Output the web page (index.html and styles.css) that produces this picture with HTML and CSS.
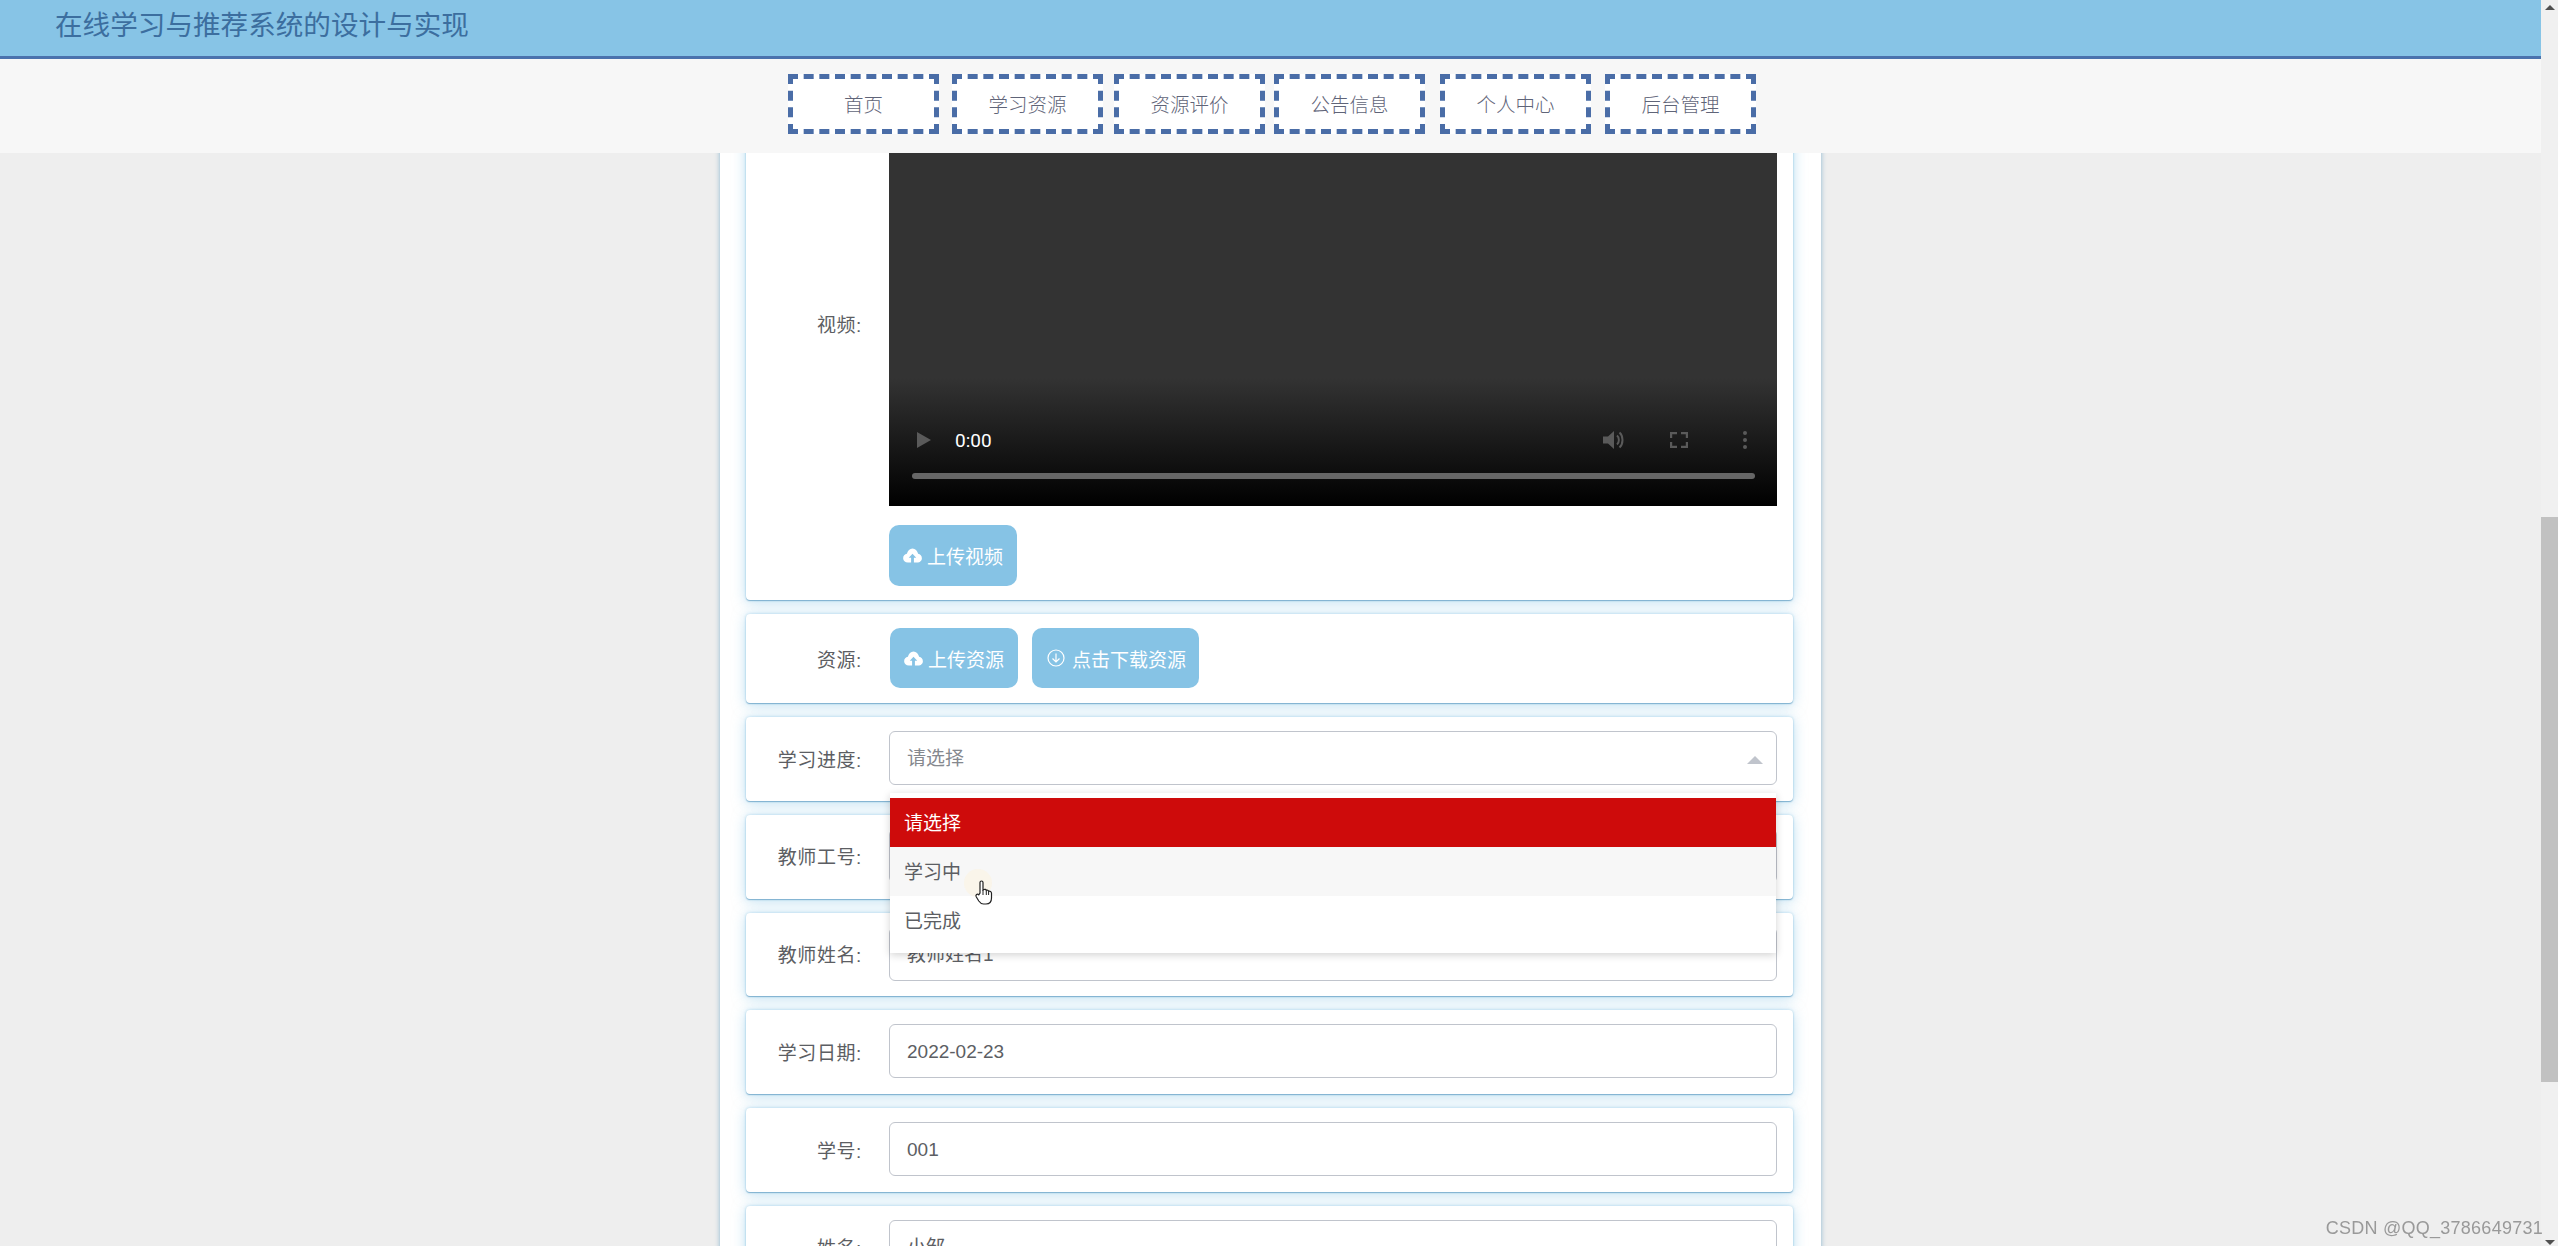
FILE: index.html
```html
<!DOCTYPE html>
<html lang="zh-CN">
<head>
    <meta charset="UTF-8">
    <title>在线学习与推荐系统的设计与实现</title>
    <link rel="stylesheet" href="styles.css">
</head>
<body>
    <div class="page">
        <header class="title-bar">
            <h1>在线学习与推荐系统的设计与实现</h1>
        </header>
        <nav class="nav-bar">
            <a class="nav-item">首页</a>
            <a class="nav-item">学习资源</a>
            <a class="nav-item">资源评价</a>
            <a class="nav-item">公告信息</a>
            <a class="nav-item">个人中心</a>
            <a class="nav-item">后台管理</a>
        </nav>

        <main class="content">
            <form class="panel">
                <div class="row row-video">
                    <label class="row-label">视频:</label>
                    <div class="row-body">
                        <div class="video">
                            <div class="video-controls">
                                <svg class="video-play" width="14" height="16" viewBox="0 0 14 16"><path d="M0 0L14 8L0 16Z"/></svg>
                                <span class="video-time">0:00</span>
                                <svg class="video-volume" width="22" height="20" viewBox="0 0 22 20"><path d="M1 6.500H6L12 1V19L6 13.500H1Z"/><path d="M15 5.500C17.500 7.500 17.500 12.500 15 14.500M17.500 2.500C21.500 6 21.500 14 17.500 17.500" fill="none" stroke="#5a5a5a" stroke-width="2"/></svg>
                                <svg class="video-full" width="18" height="16" viewBox="0 0 18 16"><path d="M1 6V1H7M11 1H17V6M17 10V15H11M7 15H1V10" fill="none" stroke="#5a5a5a" stroke-width="2.400"/></svg>
                                <svg class="video-menu" width="4" height="18" viewBox="0 0 4 18"><circle cx="2" cy="2" r="2"/><circle cx="2" cy="9" r="2"/><circle cx="2" cy="16" r="2"/></svg>
                            </div>
                            <div class="video-progress"></div>
                        </div>
                        <button type="button" class="btn btn-upload btn-tall">
                            <svg class="icon" viewBox="0 0 20 16"><path d="M5 15.500C2.200 15.500 0 13.400 0 10.800C0 8.500 1.700 6.600 4 6.200C4.800 2.800 7.100 0.500 10 0.500C12.900 0.500 15.200 2.800 16 6.200C18.300 6.600 20 8.500 20 10.800C20 13.400 17.800 15.500 15 15.500H11.500V10.500H14L10 6L6 10.500H8.500V15.500Z"/></svg>
                            上传视频
                        </button>
                    </div>
                </div>

                <div class="row row-resource">
                    <label class="row-label">资源:</label>
                    <div class="row-body row-buttons">
                        <button type="button" class="btn btn-upload">
                            <svg class="icon" viewBox="0 0 20 16"><path d="M5 15.500C2.200 15.500 0 13.400 0 10.800C0 8.500 1.700 6.600 4 6.200C4.800 2.800 7.100 0.500 10 0.500C12.900 0.500 15.200 2.800 16 6.200C18.300 6.600 20 8.500 20 10.800C20 13.400 17.800 15.500 15 15.500H11.500V10.500H14L10 6L6 10.500H8.500V15.500Z"/></svg>
                            上传资源
                        </button>
                        <button type="button" class="btn btn-download">
                            <svg class="icon-line" viewBox="0 0 18 18"><circle cx="9" cy="9" r="8"/><path d="M9 4.500V12.500M5.500 9.500L9 13L12.500 9.500"/></svg>
                            点击下载资源
                        </button>
                    </div>
                </div>

                <div class="row">
                    <label class="row-label">学习进度:</label>
                    <div class="row-body select">
                        <div class="input input-placeholder">请选择</div>
                        <span class="select-arrow"></span>
                        <ul class="select-menu">
                            <li class="select-option is-selected">请选择</li>
                            <li class="select-option is-hover">学习中</li>
                            <li class="select-option">已完成</li>
                        </ul>
                    </div>
                </div>

                <div class="row">
                    <label class="row-label">教师工号:</label>
                    <div class="row-body"><div class="input">教师工号1</div></div>
                </div>
                <div class="row">
                    <label class="row-label">教师姓名:</label>
                    <div class="row-body"><div class="input">教师姓名1</div></div>
                </div>
                <div class="row">
                    <label class="row-label">学习日期:</label>
                    <div class="row-body"><div class="input">2022-02-23</div></div>
                </div>
                <div class="row">
                    <label class="row-label">学号:</label>
                    <div class="row-body"><div class="input">001</div></div>
                </div>
                <div class="row">
                    <label class="row-label">姓名:</label>
                    <div class="row-body"><div class="input">小邹</div></div>
                </div>
            </form>
        </main>
    </div>

    <div class="scrollbar">
        <span class="scroll-up"></span>
        <div class="scroll-thumb"></div>
        <span class="scroll-down"></span>
    </div>

    <div class="watermark">CSDN @QQ_3786649731</div>

    <svg class="cursor" width="18" height="25" viewBox="0 0 18 25">
        <circle class="cursor-halo" cx="3" cy="3" r="14"/>
        <path d="M5 13V2.500C5 0.500 8 0.500 8 2.500V10L9 9.500C10 9 11 9.500 11.300 10.300C12.300 9.800 13.300 10.300 13.600 11.200C14.800 10.800 16.500 11.500 16.500 13.200V18C16.500 21.500 14.500 24 11 24H8.500C6 24 5 22.800 3.800 21L1.200 16.800C0.200 15 2.300 13.300 3.800 14.800Z" fill="#fff" stroke="#222" stroke-width="1.200"/>
        <path d="M8 10V15M11.300 10.300V15M13.600 11.200V15" fill="none" stroke="#222" stroke-width="1"/>
    </svg>
</body>
</html>
```

FILE: styles.css
```css
/* Global styles */
* {
    box-sizing: border-box;
}

html,
body {
    height: 100%;
    margin: 0;
    overflow: hidden;
}

body {
    display: flex;
    background-color: #eeeeee;
    color: #5c5e63;
    font-family: "Liberation Sans", "Noto Sans CJK SC", sans-serif;
    font-size: 19px;
}

.page {
    flex: 1;
    min-width: 0;
    display: flex;
    flex-direction: column;
    height: 100%;
}

/* Title and navigation */
.title-bar {
    flex: none;
    height: 59px;
    padding-left: 55px;
    background-color: #87c4e6;
    border-bottom: 3px solid #4a72ad;
}

.title-bar h1 {
    margin: 0;
    color: #3c6e9f;
    font-size: 27.600px;
    font-weight: 400;
    line-height: 52px;
}

.nav-bar {
    flex: none;
    position: relative;
    z-index: 2;
    display: flex;
    justify-content: center;
    align-items: flex-start;
    height: 94px;
    padding: 15px 0 0 3px;
    background-color: #f7f7f7;
}

.nav-item {
    width: 151px;
    height: 60px;
    background-color: #fff;
    border: 5px dashed #4a6da7;
    color: #5f6478;
    font-size: 19.500px;
    font-weight: 300;
    line-height: 52px;
    text-align: center;
}

.nav-item:nth-child(2) { margin-left: 13px; }
.nav-item:nth-child(3) { margin-left: 11px; }
.nav-item:nth-child(4) { margin-left: 9px; }
.nav-item:nth-child(5) { margin-left: 15px; }
.nav-item:nth-child(6) { margin-left: 14px; }

/* Form panel, scrolled so that the top of it sits under the nav */
.content {
    flex: 1;
    min-height: 0;
    overflow: hidden;
    display: flex;
    justify-content: center;
}

.panel {
    flex: none;
    width: 1101px;
    height: 1300px;
    margin-top: -107px;
    padding: 0 28px 0 26px;
    background-color: #fff;
    box-shadow: 0 0 5px rgba(110, 165, 195, 0.8);
}

.row {
    display: flex;
    align-items: center;
    margin-bottom: 14px;
    padding: 14px 16px 15.800px 0;
    background-color: #fff;
    border-radius: 4px;
    box-shadow: 0 1px 1px rgba(110, 165, 200, 0.8), 0 0 3px rgba(135, 196, 230, 0.6), 0 2px 14px rgba(135, 196, 230, 0.55);
}

.row-video {
    height: 554px;
    padding-bottom: 14px;
}

.row-resource {
    padding-bottom: 15px;
}

.row-label {
    flex: none;
    width: 116px;
    margin-right: 27px;
    letter-spacing: 0.600px;
    text-align: right;
}

.row-body {
    position: relative;
    flex: 1;
    min-width: 0;
}

.row-buttons {
    display: flex;
    gap: 14px;
    padding-left: 1px;
}

/* Video player */
.video {
    position: relative;
    height: 446px;
    margin-bottom: 19px;
    background: linear-gradient(#333333 0, #333333 318px, #000000 100%);
}

.video-controls {
    position: absolute;
    left: 28px;
    right: 30px;
    bottom: 56px;
    display: flex;
    align-items: center;
    height: 20px;
    fill: #5a5a5a;
}

.video-time {
    margin-left: 24px;
    color: #fff;
    font-family: Roboto, sans-serif;
    font-size: 19px;
    font-weight: 400;
}

.video-volume {
    margin-left: auto;
    margin-right: 46px;
}

.video-full {
    margin-right: 55px;
}

.video-progress {
    position: absolute;
    left: 23px;
    right: 22px;
    bottom: 27px;
    height: 6px;
    background-color: #666;
    border-radius: 3px;
}

/* Buttons */
.btn {
    display: flex;
    align-items: center;
    height: 60px;
    padding: 0 13px 0 14px;
    background-color: #86c3e5;
    border: 0;
    border-radius: 10px;
    color: #fff;
    font-family: inherit;
    font-size: 19px;
}

.btn-tall {
    height: 61px;
}

.btn-upload {
    width: 128px;
}

.btn-download {
    width: 167px;
    padding-left: 15px;
}

.icon {
    flex: none;
    width: 19px;
    height: 15px;
    margin-right: 5px;
    fill: #fff;
}

.icon-line {
    flex: none;
    width: 18px;
    height: 18px;
    margin-right: 7px;
    fill: none;
    stroke: #fff;
    stroke-width: 1.200;
}

/* Inputs */
.input {
    height: 54px;
    padding: 0 17px;
    background-color: #fff;
    border: 1px solid #c0c4cc;
    border-radius: 6px;
    line-height: 54px;
}

.input-placeholder {
    color: #85888e;
}

.select-arrow {
    position: absolute;
    top: 25px;
    right: 14px;
    border-left: 8px solid transparent;
    border-right: 8px solid transparent;
    border-bottom: 8px solid #c0c4cc;
}

.select-menu {
    position: absolute;
    z-index: 1;
    top: 62px;
    left: 1px;
    right: 1px;
    height: 160px;
    margin: 0;
    padding: 5px 0 0;
    list-style: none;
    background-color: #fff;
    box-shadow: 0 2px 8px rgba(0, 0, 0, 0.18);
}

.select-option {
    height: 49px;
    padding-left: 14px;
    line-height: 51px;
}

.select-option.is-selected {
    background-color: #ce0b0b;
    color: #fff;
}

.select-option.is-hover {
    background-color: #f7f7f7;
}

/* Scrollbar */
.scrollbar {
    flex: none;
    display: flex;
    flex-direction: column;
    align-items: center;
    width: 17px;
    height: 100%;
    padding: 5px 0 1px;
    background-color: #f0f0f0;
}

.scroll-up {
    border-left: 5px solid transparent;
    border-right: 5px solid transparent;
    border-bottom: 5px solid #505050;
}

.scroll-thumb {
    flex: none;
    width: 100%;
    height: 565px;
    margin-top: 507px;
    background-color: #c1c1c1;
}

.scroll-down {
    margin-top: auto;
    border-left: 5px solid transparent;
    border-right: 5px solid transparent;
    border-top: 5px solid #505050;
}

/* Watermark and mouse pointer lie over the page */
.watermark {
    position: fixed;
    z-index: 3;
    right: 15px;
    bottom: 7px;
    color: #999;
    font-size: 18px;
    letter-spacing: 0.260px;
}

.cursor {
    position: fixed;
    z-index: 4;
    left: 975px;
    top: 880px;
    overflow: visible;
}

.cursor-halo {
    fill: #fbf3e4;
    opacity: 0.7;
}
```
